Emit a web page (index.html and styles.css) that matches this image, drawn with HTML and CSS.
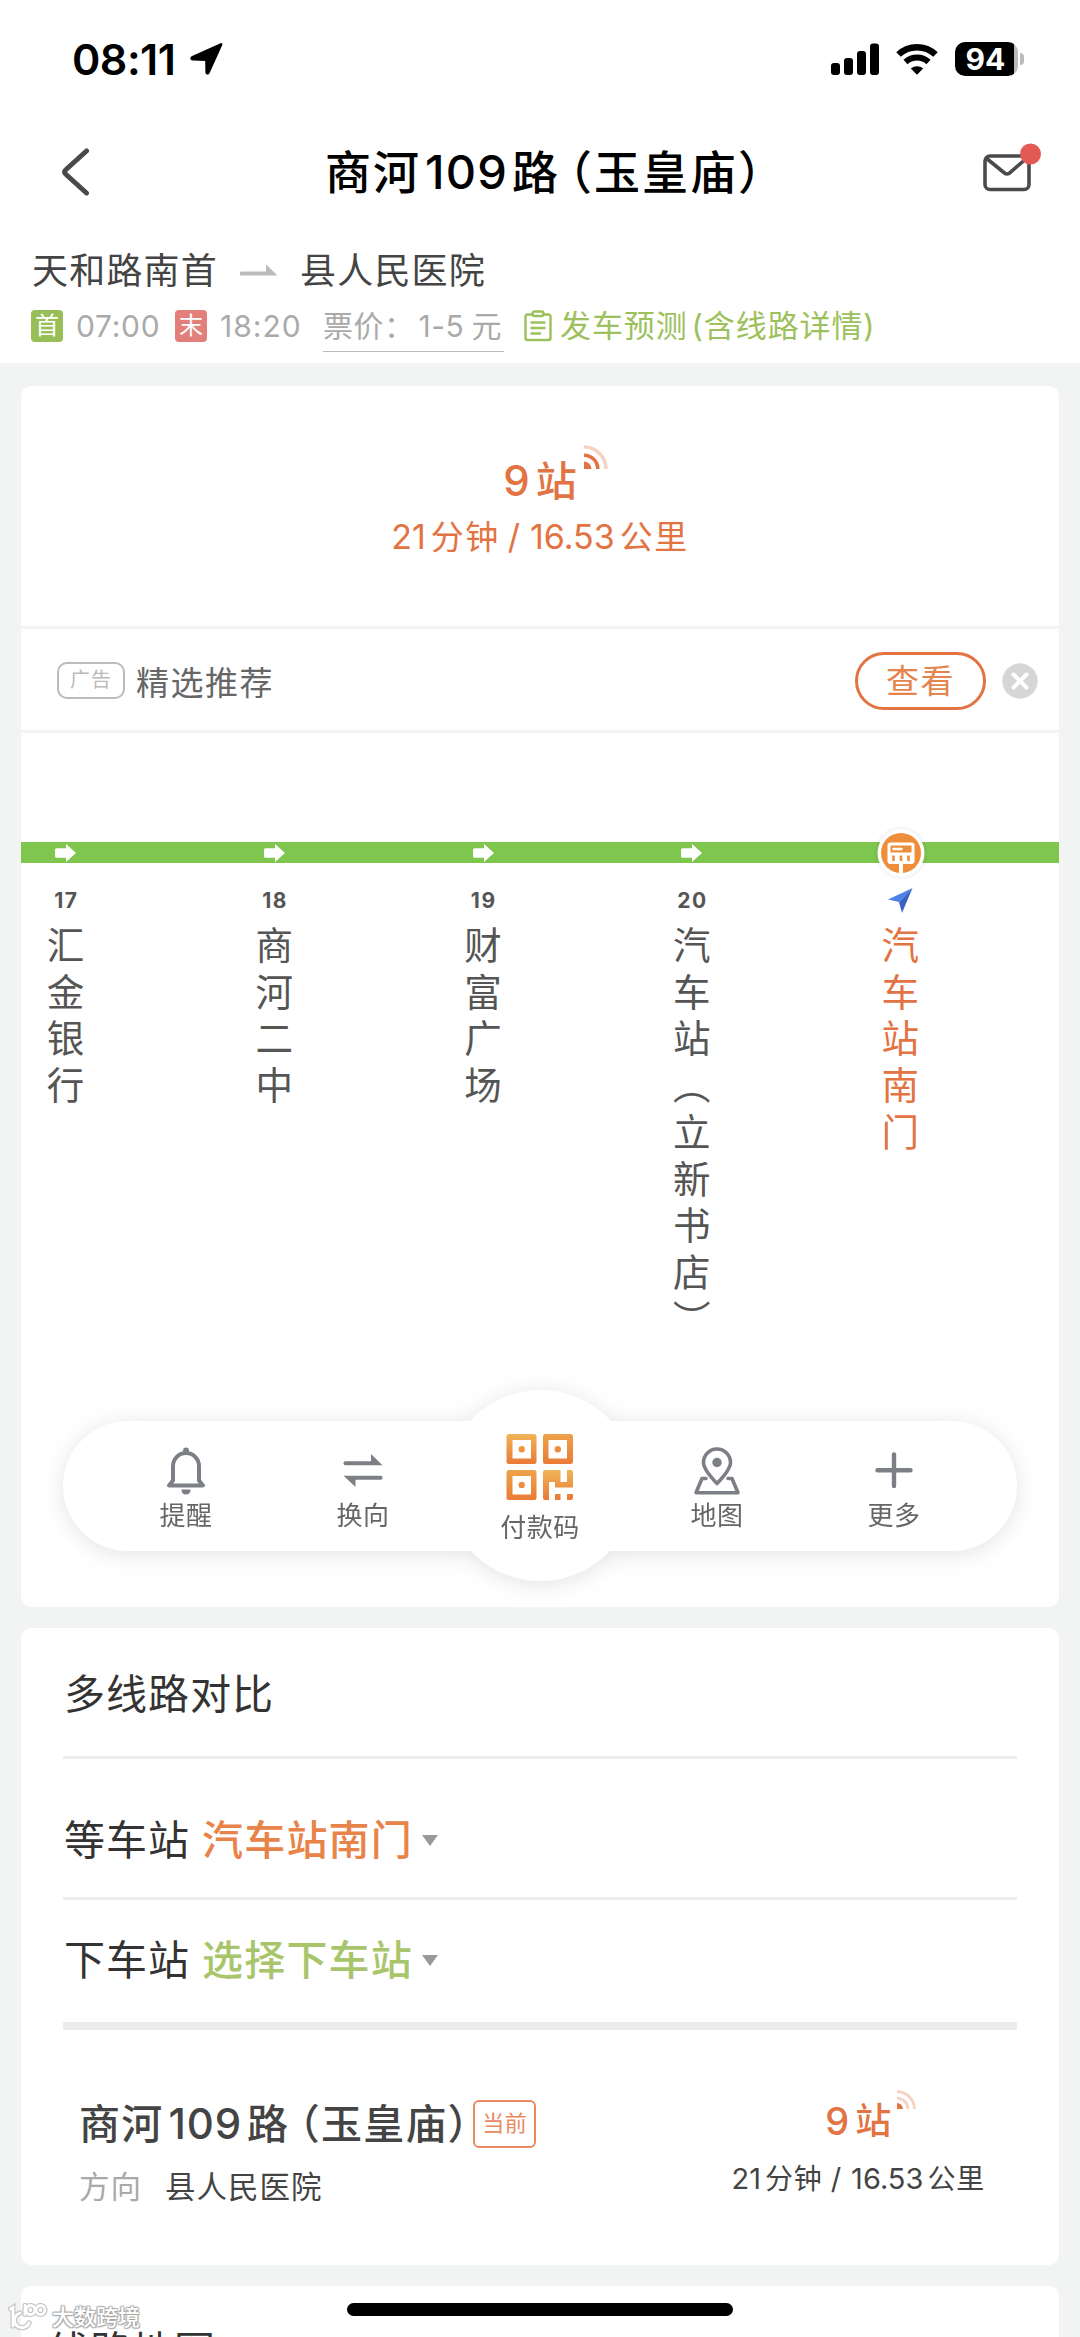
FILE: index.html
```html
<!DOCTYPE html>
<html lang="zh-CN">
<head>
<meta charset="utf-8">
<title>商河109路（玉皇庙）</title>
<link rel="stylesheet" href="styles.css">
</head>
<body>
<div class="screen">
  <header class="header">
    <div class="status">
      <div class="status-left">
        <span class="clock">08:11</span>
        <svg class="loc" width="34" height="34" viewBox="0 0 34 34"><path d="M31.500 1.200c1.200-.5 2.300.6 1.800 1.900L20.500 31.200c-.8 1.900-4 1.600-4.100-.8L16.200 18.900 4 18.400c-3.300-.2-3.600-3.300-.9-4.500z" fill="#000"/></svg>
      </div>
      <div class="status-right">
        <svg width="48" height="32" viewBox="0 0 48 32"><rect x="0" y="20" width="9" height="12" rx="3"/><rect x="13" y="15" width="9" height="17" rx="3"/><rect x="26" y="8" width="9" height="24" rx="3"/><rect x="39" y="0.500" width="9" height="31.500" rx="3"/></svg>
        <svg class="wifi" width="42" height="32" viewBox="0 0 42 32"><path d="M2.500 11.500a27 27 0 0 1 37 0" fill="none" stroke="#000" stroke-width="6.500"/><path d="M9.500 19a17 17 0 0 1 23 0" fill="none" stroke="#000" stroke-width="6"/><path d="M14.800 25.500a9.500 9.500 0 0 1 12.400 0L21 31.800z"/></svg>
        <div class="battery"><span class="battery-body">94</span><i class="battery-nub"></i></div>
      </div>
    </div>
    <div class="titlebar">
      <svg class="back" width="28" height="48" viewBox="0 0 28 48"><path d="M24.500 3L3.800 21.700q-2.300 2.300 0 4.600L24.500 45" fill="none" stroke="#4a4a4a" stroke-width="5" stroke-linecap="round"/></svg>
      <h1 class="title"><span>商河</span><b class="num">109</b><span>路</span><span class="paren">（</span><span class="half">玉皇庙）</span></h1>
      <svg class="mail" width="60" height="52" viewBox="0 0 60 52"><rect x="3" y="14" width="44" height="33.500" rx="5" fill="none" stroke="#4a4a4a" stroke-width="3.600"/><path d="M4 16l18.500 15q2.500 2 5 0L45 16" fill="none" stroke="#4a4a4a" stroke-width="3.600"/><circle cx="48.500" cy="12" r="10.500" fill="#e35a55"/></svg>
    </div>
    <div class="direction">
      <span>天和路南首</span>
      <svg width="38" height="12" viewBox="0 0 38 12"><path d="M1.500 7.500H26V.3L37.500 11.500H1.500a1.700 1.700 0 0 1 0-4z" fill="#bbb"/></svg>
      <span>县人民医院</span>
    </div>
    <div class="times">
      <i class="tag tag-first">首</i><span class="hour h1">07:00</span>
      <i class="tag tag-last">末</i><span class="hour h2">18:20</span>
      <span class="fare"><span>票价：</span><span class="fare-n">1-5</span><span>元</span></span>
      <svg class="clip" width="28" height="32" viewBox="0 0 28 32"><g fill="none" stroke="#9cc15c" stroke-width="2.400" stroke-linecap="round" stroke-linejoin="round"><path d="M7.500 4.500H3.500a2 2 0 0 0-2 2V28a2 2 0 0 0 2 2h21a2 2 0 0 0 2-2V6.500a2 2 0 0 0-2-2h-4"/><rect x="8.500" y="1.500" width="11" height="4.500" rx="2"/><path d="M7.500 12.500h13M7.500 18h13M7.500 23.500h8.500"/></g></svg>
      <span class="forecast"><span>发车预测</span><span class="lp">(</span><span>含线路详情</span><span>)</span></span>
    </div>
  </header>

  <main class="cards">
    <section class="card card-line">
      <div class="arrival">
        <div class="arrival-main"><b>9</b><span>站</span>
          <svg class="rss" width="24" height="24" viewBox="0 0 24 24"><path d="M0 24v-7.500A7.500 7.500 0 0 1 7.500 24z" fill="#e27343"/><path d="M0 10.200A13.800 13.800 0 0 1 13.800 24" fill="none" stroke="#e27343" stroke-width="3.600"/><path d="M0 2A22 22 0 0 1 22 24" fill="none" stroke="#f6d2c3" stroke-width="3.600"/></svg>
        </div>
        <div class="arrival-sub"><span>21</span><span class="cj">分钟</span><span class="slash">/</span><span class="km">16.53</span><span class="cj">公里</span></div>
      </div>
      <div class="ad">
        <span class="ad-tag">广告</span><span class="ad-text">精选推荐</span>
        <span class="ad-btn">查看</span>
        <svg class="ad-close" width="36" height="36" viewBox="0 0 36 36"><circle cx="18" cy="18" r="17.700" fill="#d6d6d6"/><path d="M11.500 11.500l13 13M24.500 11.500l-13 13" stroke="#fff" stroke-width="4" stroke-linecap="round"/></svg>
      </div>
      <div class="track">
        <ol class="stations">
          <li class="station"><div class="seg"><svg width="21" height="18" viewBox="0 0 21 18"><path d="M1.500 4.300H11V0l10 9-10 9v-4.300H1.500A1.500 1.500 0 0 1 0 12.200V5.800a1.500 1.500 0 0 1 1.500-1.500z" fill="#fff"/></svg></div><b class="no">17</b><span class="name">汇金银行</span></li>
          <li class="station"><div class="seg"><svg width="21" height="18" viewBox="0 0 21 18"><path d="M1.500 4.300H11V0l10 9-10 9v-4.300H1.500A1.500 1.500 0 0 1 0 12.200V5.800a1.500 1.500 0 0 1 1.500-1.500z" fill="#fff"/></svg></div><b class="no">18</b><span class="name">商河二中</span></li>
          <li class="station"><div class="seg"><svg width="21" height="18" viewBox="0 0 21 18"><path d="M1.500 4.300H11V0l10 9-10 9v-4.300H1.500A1.500 1.500 0 0 1 0 12.200V5.800a1.500 1.500 0 0 1 1.500-1.500z" fill="#fff"/></svg></div><b class="no">19</b><span class="name">财富广场</span></li>
          <li class="station"><div class="seg"><svg width="21" height="18" viewBox="0 0 21 18"><path d="M1.500 4.300H11V0l10 9-10 9v-4.300H1.500A1.500 1.500 0 0 1 0 12.200V5.800a1.500 1.500 0 0 1 1.500-1.500z" fill="#fff"/></svg></div><b class="no">20</b><span class="name">汽车站（立新书店）</span></li>
          <li class="station here"><div class="seg"><svg class="stop" width="60" height="60" viewBox="0 0 60 60"><circle cx="30" cy="30" r="26.500" fill="#000" opacity=".03"/><circle cx="30" cy="30" r="23.500" fill="#fff"/><circle cx="30" cy="30" r="20" fill="#ee8e3b"/><path d="M19.500 19.500h21a3 3 0 0 1 3 3v15.500a3 3 0 0 1-3 3H32v10h-4V41h-8.500a3 3 0 0 1-3-3V22.500a3 3 0 0 1 3-3z" fill="#fff"/><path d="M19.500 22.500h21v7h-21zM21.200 32.500h2.600v5.500h-2.600zM28.700 32.500h2.600v5.500h-2.600zM36.200 32.500h2.600v5.500h-2.600z" fill="#ee8e3b"/><path d="M22.500 26h8" stroke="#fff" stroke-width="2.400" stroke-linecap="round"/></svg></div><svg class="nav" width="25" height="25" viewBox="0 0 25 25"><path d="M24.500 0L0 11.500l11 2.500z" fill="#4d82ea"/><path d="M24.500 0L11 14l3 11z" fill="#3a63c0"/></svg><span class="name">汽车站南门</span></li>
          <li class="station"><div class="seg"></div></li>
        </ol>
      </div>
      <nav class="tools">
        <div class="shape"><div class="shape-hub"></div></div>
        <div class="tool-row">
          <a class="tool"><svg width="40" height="48" viewBox="0 0 40 48"><circle cx="20" cy="3.500" r="3" fill="#7d7f86"/><path d="M3 38.500l4-5V19a13 13 0 0 1 26 0v14.500l4 5z" fill="none" stroke="#7d7f86" stroke-width="4" stroke-linejoin="round"/><path d="M15.500 42.500h9q0 5-4.500 5t-4.500-5z" fill="#7d7f86"/></svg><span>提醒</span></a>
          <a class="tool"><svg width="40" height="48" viewBox="0 0 40 48"><path d="M2.500 14.200H28V7l11.500 11.300h-37a2 2 0 0 1 0-4.100zM37.500 28.700a2 2 0 0 1 0 4.100H12.500V40L.5 28.700z" fill="#7d7f86"/></svg><span>换向</span></a>
          <a class="tool pay"><svg width="68" height="68" viewBox="0 0 68 68"><defs><linearGradient id="qa" x1="0" y1="0" x2="0" y2="1"><stop offset="0" stop-color="#f0b458"/><stop offset="1" stop-color="#ea7a35"/></linearGradient><linearGradient id="qb" x1="0" y1="0" x2="0" y2="1"><stop offset="0" stop-color="#eea24b"/><stop offset="1" stop-color="#ea7b36"/></linearGradient></defs><g fill-rule="evenodd"><path d="M3 1h25a2.500 2.500 0 0 1 2.500 2.500v25A2.500 2.500 0 0 1 28 31H3a2.500 2.500 0 0 1-2.500-2.500v-25A2.500 2.500 0 0 1 3 1zM6.500 7v18.500H25V7zM15.700 13a3.200 3.200 0 1 1 0 6.400 3.200 3.200 0 0 1 0-6.400z" fill="url(#qa)"/><path d="M39.500 1h25a2.500 2.500 0 0 1 2.500 2.500v25a2.500 2.500 0 0 1-2.500 2.500h-25a2.500 2.500 0 0 1-2.500-2.500v-25A2.500 2.500 0 0 1 39.500 1zM42.500 7v18.500H61V7zM51.800 13a3.200 3.200 0 1 1 0 6.400 3.200 3.200 0 0 1 0-6.400z" fill="url(#qb)"/><path d="M3 37h25a2.500 2.500 0 0 1 2.500 2.500v25A2.500 2.500 0 0 1 28 67H3a2.500 2.500 0 0 1-2.500-2.500v-25A2.500 2.500 0 0 1 3 37zM6.500 43v18.500H25V43zM15.700 48.700a3.200 3.200 0 1 1 0 6.400 3.200 3.200 0 0 1 0-6.400z" fill="url(#qb)"/><path d="M39.500 37H54.500V49H61V37h3.500a2.500 2.500 0 0 1 2.500 2.500V54.500H49V49H43V67h-3.500a2.500 2.500 0 0 1-2.500-2.500v-25A2.500 2.500 0 0 1 39.500 37zM49 61h5.500v6H49zM61 61h6v3.500a2.500 2.500 0 0 1-2.500 2.500H61z" fill="url(#qa)"/></g></svg><span>付款码</span></a>
          <a class="tool"><svg width="48" height="48" viewBox="0 0 48 48"><g fill="none" stroke="#7d7f86" stroke-width="3.600" stroke-linejoin="round" stroke-linecap="round"><path d="M24 36.500Q10.500 22.500 10.500 15.500a13.500 13.500 0 0 1 27 0Q37.500 22.500 24 36.500z"/><path d="M13 31.500H9L3 45.700h42L39 31.500h-4"/></g><circle cx="24" cy="15.500" r="4.700" fill="#7d7f86"/></svg><span>地图</span></a>
          <a class="tool"><svg width="40" height="48" viewBox="0 0 40 48"><path d="M20 7.500v31.500M3.500 23.300h33" stroke="#7d7f86" stroke-width="4.400" stroke-linecap="round"/></svg><span>更多</span></a>
        </div>
      </nav>
    </section>

    <section class="card compare">
      <h2 class="cmp-title">多线路对比</h2>
      <div class="pick pick-on"><span>等车站</span><b class="orange">汽车站南门</b><i class="caret"></i></div>
      <div class="pick pick-off"><span>下车站</span><b class="green">选择下车站</b><i class="caret"></i></div>
      <div class="route">
        <div class="route-left">
          <div class="route-name"><span>商河</span><b class="num">109</b><span>路</span><span class="paren">（</span><span class="half">玉皇庙）</span><i class="now">当前</i></div>
          <div class="route-dir"><span class="muted">方向</span><span>县人民医院</span></div>
        </div>
        <div class="route-right">
          <div class="eta"><b>9</b><span>站</span><svg class="rss" width="19" height="19" viewBox="0 0 24 24"><path d="M0 24v-7.500A7.500 7.500 0 0 1 7.500 24z" fill="#e27343"/><path d="M0 10.200A13.800 13.800 0 0 1 13.800 24" fill="none" stroke="#f6d2c3" stroke-width="3.600"/><path d="M0 2A22 22 0 0 1 22 24" fill="none" stroke="#f6d2c3" stroke-width="3.600"/></svg></div>
          <div class="eta-sub"><span>21</span><span class="cj">分钟</span><span class="slash">/</span><span class="km">16.53</span><span class="cj">公里</span></div>
        </div>
      </div>
    </section>

    <section class="card map-card"><h2>线路地图</h2></section>
  </main>

  <div class="watermark">
    <svg width="40" height="28" viewBox="0 0 40 28"><g fill="none" stroke-linecap="round"><g stroke="#c4c4c4" stroke-width="5.200"><path d="M2.500 6L5 4.500V23"/><path d="M12 10a7.500 7.500 0 1 0 9 10"/><path d="M17 2.500v9"/><circle cx="22.500" cy="7" r="4.500"/><circle cx="32.500" cy="7" r="4.500"/></g><g stroke="#fff" stroke-width="2.800"><path d="M2.500 6L5 4.500V23"/><path d="M12 10a7.500 7.500 0 1 0 9 10"/><path d="M17 2.500v9"/><circle cx="22.500" cy="7" r="4.500"/><circle cx="32.500" cy="7" r="4.500"/></g></g></svg>
    <span>大数跨境</span>
  </div>
  <div class="home-bar"></div>
</div>
</body>
</html>
```
FILE: styles.css
```css
* { box-sizing: border-box; margin: 0; padding: 0; }
body {
  font-family: Inter, "Noto Sans CJK SC", sans-serif;
  background: #f2f4f3;
  color: #444;
}
svg { display: block; flex: none; }
i { font-style: normal; }
b { font-weight: 500; }
span, i, b { white-space: nowrap; }
.screen { position: relative; width: 1080px; height: 2337px; overflow: hidden; }
.paren, .half { font-feature-settings: "halt" 1; }

/* header */
.header { height: 363px; background: #fff; }
.status { height: 118px; padding: 36px 56px 0 72px; display: flex; justify-content: space-between; align-items: flex-start; }
.status-left { display: flex; align-items: center; height: 46px; }
.clock { font-size: 43px; font-weight: 600; line-height: 46px; color: #000; letter-spacing: -.5px; width: 117px; }
.status-right { display: flex; align-items: center; height: 46px; gap: 17px; }
.battery { display: flex; align-items: center; gap: 2px; }
.battery-body {
  width: 63px; height: 34px; border-radius: 10px; line-height: 34px;
  background: linear-gradient(90deg, #000 59px, #bbb 59px);
  color: #fff; font-size: 30px; font-weight: 700; text-align: center; padding-right: 2px;
}
.battery-nub { width: 4px; height: 12px; border-radius: 0 4px 4px 0; background: #bbb; }

.titlebar { height: 108px; padding: 0 38px 0 62px; display: flex; align-items: center; }
.title { display: flex; font-size: 46px; line-height: 60px; font-weight: 500; letter-spacing: 2px; color: #000; margin-left: 235px; }
.title .num { margin: 0 4px; letter-spacing: 1.200px; font-size: 47px; }
.title .paren { margin-left: 9px; }
.mail { margin: -8px 0 0 auto; }

.direction { height: 60px; margin-top: 13px; padding: 0 0 3px 32px; display: flex; align-items: center; font-size: 36px; letter-spacing: 1.200px; }
.direction svg { margin: 4px 22px 0 22px; }
.times { height: 54px; padding-left: 31px; display: flex; align-items: center; font-size: 30px; color: #aaa; line-height: 44px; }
.tag { width: 32px; height: 32px; border-radius: 4px; color: #fff; font-size: 24px; line-height: 31px; text-align: center; }
.tag-first { background: #98bf57; }
.tag-last { background: #e37f7a; }
.h1 { margin-left: 13px; width: 99px; letter-spacing: .7px; }
.h2 { margin-left: 13px; width: 103px; letter-spacing: 1px; }
.fare { display: flex; width: 181px; height: 50px; padding-top: 2px; border-bottom: 1px solid #bbb; letter-spacing: .5px; margin-top: 2px; }
.fare-n { margin-left: 4px; width: 53px; }
.clip { margin: 0 8px 0 20px; }
.forecast { display: flex; color: #9cc15c; font-size: 31px; letter-spacing: .9px; }
.lp { margin-left: 4px; }

/* cards */
.cards { padding: 23px 21px 0; display: flex; flex-direction: column; gap: 21px; }
.card { background: #fff; border-radius: 10px; overflow: hidden; }
.card-line { height: 1221px; }

.arrival { height: 243px; padding-top: 67px; border-bottom: 3px solid #f2f3f3; display: flex; flex-direction: column; align-items: center; color: #e27343; }
.arrival-main { display: flex; font-size: 41px; line-height: 56px; font-weight: 500; gap: 6px; }
.arrival-main b { font-size: 42px; }
.arrival-main .rss { margin: -8px -31px 0 1px; }
.arrival-sub { display: flex; font-size: 34px; line-height: 54px; margin-top: 1px; }
.arrival-sub .cj { font-size: 33px; letter-spacing: 1.500px; margin-left: 5px; }
.slash { margin: 0 10px 0 8px; }

.ad { height: 104px; padding: 2px 21px 0 36px; border-bottom: 3px solid #f2f3f3; display: flex; align-items: center; }
.ad-tag { width: 68px; height: 37px; border: 2px solid #bbb; border-radius: 10px; font-size: 20px; line-height: 33px; letter-spacing: 1px; text-align: center; color: #bbb; }
.ad-text { margin-left: 11px; font-size: 33px; letter-spacing: 1.500px; color: #666; flex: 1; }
.ad-btn { width: 131px; height: 58px; border: 3px solid #e27343; border-radius: 29px; font-size: 33px; line-height: 52px; letter-spacing: 1.500px; text-align: center; color: #e6844d; margin-right: 16px; }

.track { height: 656px; padding-top: 109px; overflow: hidden; }
.stations { list-style: none; display: flex; margin-left: -59.500px; width: 1260px; }
.station { flex: 0 0 208.700px; display: flex; flex-direction: column; align-items: center; color: #555; }
.seg { width: 100%; height: 21px; background: #7fc64f; display: flex; align-items: center; justify-content: center; }
.stop { margin: -20px 0; }
.no { font-size: 21px; font-weight: 700; line-height: 26px; letter-spacing: 1.500px; margin-top: 25px; padding-left: 1px; }
.nav { margin: 25px 0 1px; }
.name { writing-mode: vertical-rl; font-family: "Noto Sans CJK SC", sans-serif; font-size: 37.500px; line-height: 48px; letter-spacing: 9.200px; margin: 12px 1.500px 0 0; }
.here .name { color: #e27343; }

/* floating toolbar */
.tools { position: relative; height: 218px; padding: 34px 42px 0; margin-top: -2px; }
.shape { position: absolute; left: 42px; right: 42px; top: 34px; height: 130px; border-radius: 65px; background: #fff; filter: drop-shadow(0 3px 11px rgba(0, 0, 0, .11)); }
.shape-hub { position: absolute; left: 382px; top: -31px; width: 191px; height: 191px; border-radius: 50%; background: #fff; }
.tool-row { position: relative; display: flex; align-items: flex-start; justify-content: space-between; height: 130px; padding: 0 53px; }
.tool { width: 140px; display: flex; flex-direction: column; align-items: center; padding-top: 26px; font-size: 26px; line-height: 34px; letter-spacing: .5px; color: #666; gap: 4px; }
.pay { padding-top: 12px; gap: 10px; }

/* comparison */
.compare { height: 637px; padding: 0 42px; }
.cmp-title { height: 131px; padding: 36px 1px 0; border-bottom: 3px solid #ececec; font-size: 41px; line-height: 60px; font-weight: 400; letter-spacing: 1px; color: #333; }
.pick { display: flex; font-size: 41px; line-height: 60px; letter-spacing: 1px; color: #333; padding-left: 1px; }
.pick b { margin-left: 12px; letter-spacing: 1.200px; }
.pick-on { height: 141px; padding-top: 51px; border-bottom: 3px solid #ececec; }
.pick-off { height: 130px; padding-top: 30px; border-bottom: 8px solid #ebebeb; }
.orange { color: #e8834a; }
.green { color: #a9c56c; }
.caret { width: 16px; height: 11px; margin: 25px 0 0 9px; background: #999; clip-path: polygon(0 0, 100% 0, 50% 100%); }
.route { display: flex; justify-content: space-between; padding: 64px 32px 0 16px; }
.route-name { display: flex; font-size: 41px; line-height: 60px; font-weight: 500; letter-spacing: 1.200px; height: 60px; }
.route-name .num { margin: 0 5px; letter-spacing: .9px; font-size: 42px; }
.route-name .paren { margin-left: 10px; }
.now { width: 63px; height: 48px; margin: 6px 0 0 4px; border: 2px solid #e88a60; border-radius: 6px; font-size: 22px; line-height: 43px; font-weight: 400; letter-spacing: .5px; text-align: center; color: #e88a60; }
.route-dir { display: flex; font-size: 30.500px; line-height: 50px; letter-spacing: 1px; margin-top: 8px; gap: 23px; }
.muted { color: #aaa; }
.route-right { display: flex; flex-direction: column; align-items: center; }
.eta { display: flex; gap: 6px; font-size: 36px; line-height: 50px; font-weight: 500; color: #e27343; padding-top: 2px; }
.eta b { font-size: 38px; }
.eta .rss { margin: -6px -25px 0 0; }
.eta-sub { display: flex; font-size: 29px; line-height: 50px; margin-top: 8px; }
.eta-sub .cj { font-size: 28px; letter-spacing: .8px; margin-left: 4px; }

.map-card { height: 120px; padding: 35px 27px; }
.map-card h2 { font-size: 41px; line-height: 60px; font-weight: 400; letter-spacing: 1px; color: #333; }

/* overlays */
.watermark { position: absolute; left: 8px; top: 2303px; display: flex; align-items: center; gap: 4px; }
.watermark span { font-size: 22px; line-height: 26px; font-weight: 500; color: #fff; text-shadow: 0 0 2px #999, 1px 1px 1px #aaa, -1px -1px 1px #bbb, 1px -1px 1px #bbb, -1px 1px 1px #bbb; }
.home-bar { position: absolute; left: 347px; top: 2303px; width: 386px; height: 13px; border-radius: 7px; background: #000; }
```
